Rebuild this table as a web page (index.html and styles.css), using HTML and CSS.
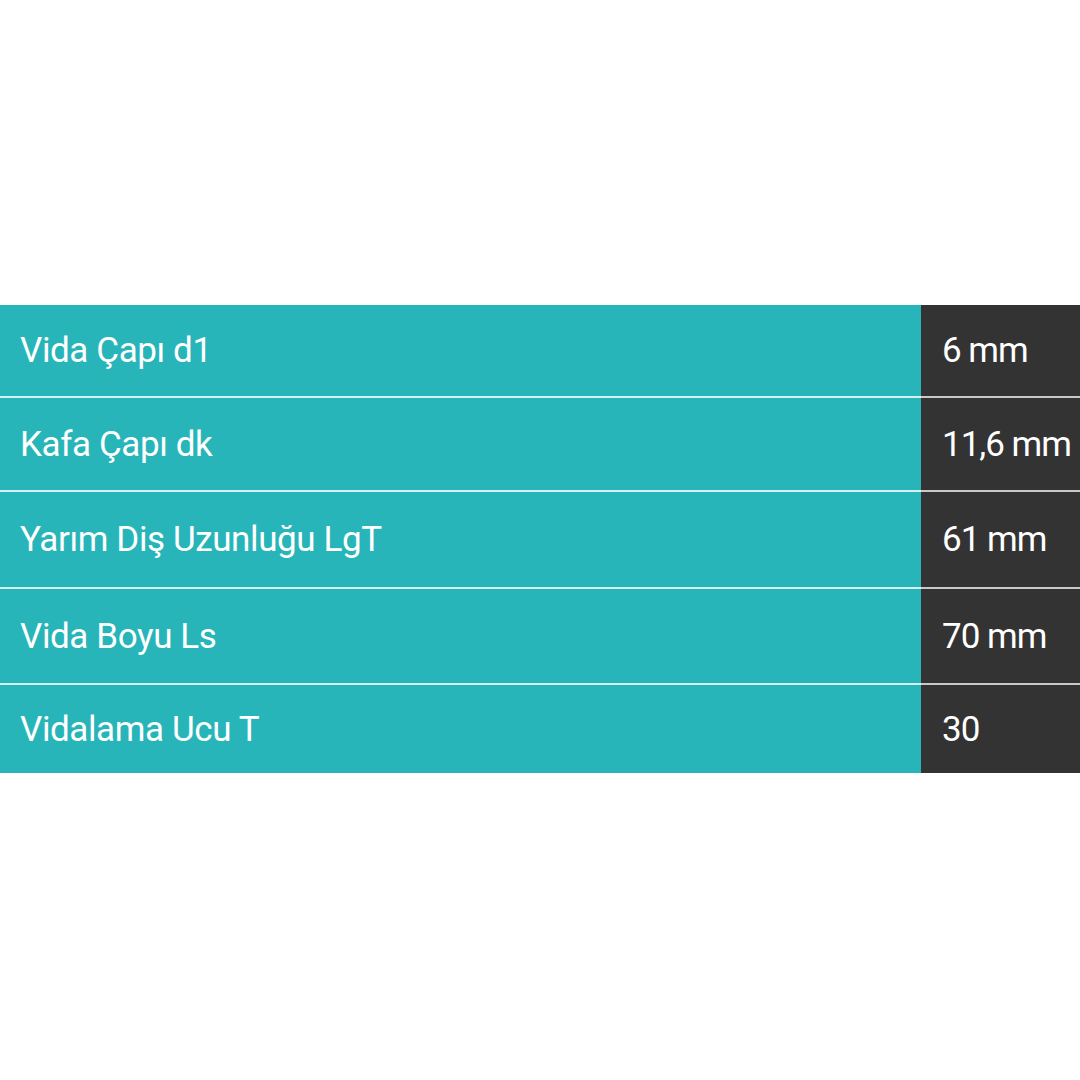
FILE: index.html
```html
<!DOCTYPE html>
<html lang="tr">
<head>
<meta charset="utf-8">
<link rel="stylesheet" href="styles.css">
</head>
<body>
<div class="page">
  <table class="specs">
    <tr class="r1"><td class="label">Vida Çapı d1</td><td class="value">6 mm</td></tr>
    <tr class="r2"><td class="label">Kafa Çapı dk</td><td class="value">11,6 mm</td></tr>
    <tr class="r3"><td class="label">Yarım Diş Uzunluğu LgT</td><td class="value">61 mm</td></tr>
    <tr class="r4"><td class="label">Vida Boyu Ls</td><td class="value">70 mm</td></tr>
    <tr class="r5"><td class="label">Vidalama Ucu T</td><td class="value">30</td></tr>
  </table>
</div>
</body>
</html>
```
FILE: styles.css
```css
html, body {
  margin: 0;
  padding: 0;
  background: #ffffff;
}
.page {
  width: 1080px;
  height: 1080px;
  display: flex;
  flex-direction: column;
  justify-content: flex-start;
  padding-top: 305px;
  box-sizing: border-box;
}
.specs {
  width: 1080px;
  border-collapse: collapse;
  font-family: Roboto, "Liberation Sans", sans-serif;
  font-size: 35px;
  color: #ffffff;
  letter-spacing: -0.4px;
}
.r1 { height: 92px; }
.r2 { height: 94px; }
.r3 { height: 97px; }
.r4 { height: 96px; }
.r5 { height: 89px; }
.specs tr + tr td {
  border-top: 2px solid #d6f1f1;
}
.specs tr + tr td.value {
  border-top-color: #c9c9c9;
}
.label {
  background: #27b5b9;
  padding: 0 0 0 20px;
  vertical-align: middle;
}
.value {
  background: #333333;
  width: 138px;
  padding: 0 0 0 21px;
  vertical-align: middle;
  white-space: nowrap;
  letter-spacing: -1px;
}
```
